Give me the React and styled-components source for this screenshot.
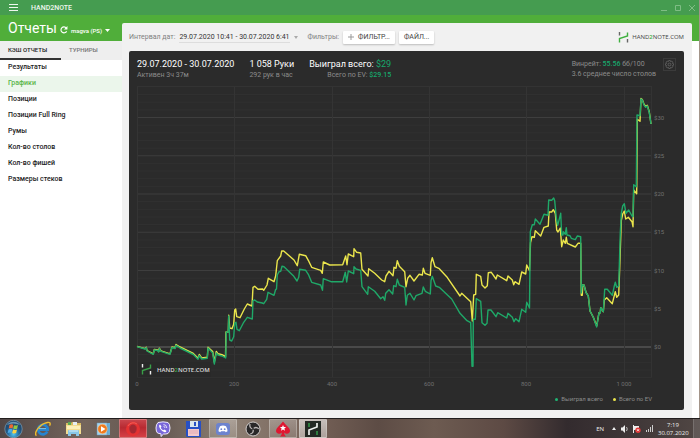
import React from "react";
import styled, { createGlobalStyle } from "styled-components";

const Global = createGlobalStyle`
  *, *::before, *::after { box-sizing: border-box; }
  body { margin: 0; font-family: Roboto, "Liberation Sans", sans-serif; font-size: 7px; line-height: 10px; color: #222; background: #fff; }
  button { font: inherit; color: inherit; background: none; border: 0; padding: 0; margin: 0; white-space: nowrap; }
  svg { display: block; flex: none; }
`;

const Screen = styled.div`
  min-height: 100vh;
  display: flex;
  flex-direction: column;
`;

const AppWindow = styled.div`
  flex: 1;
  display: flex;
  flex-direction: column;
  border-right: 1px solid #a39489;
  background: linear-gradient(#459c50 0 15px, #50ae3a 15px 41px, #fff 41px);
`;

const TitleBar = styled.header`
  height: 15px;
  display: flex;
  align-items: center;
  gap: 13px;
  padding: 0 3px 0 9px;
  color: #eef7ee;
`;

const AppName = styled.span`
  flex: 1;
  font-size: 7px;
  font-weight: 500;
`;

const WindowButtons = styled.div`
  display: flex;
  gap: 5px;
  color: #7fbd85;
`;

const IconButton = styled.button`
  display: grid;
  place-items: center;
`;

const Columns = styled.div`
  flex: 1;
  display: grid;
  grid-template-columns: 122px minmax(0, 1fr);
`;

const Sidebar = styled.aside`
  display: flex;
  flex-direction: column;
`;

const SideHeader = styled.div`
  height: 26px;
  display: flex;
  align-items: center;
  gap: 3px;
  padding-left: 8px;
  color: #fff;
`;

const SideTitle = styled.h1`
  margin: 0;
  font-size: 14px;
  line-height: 16px;
  font-weight: 400;
`;

const AccountButton = styled.button`
  display: flex;
  align-items: center;
  gap: 3px;
  padding-top: 5px;
  font-size: 6px;
  font-weight: 500;
`;

const RefreshButton = styled(IconButton)`
  padding-top: 4px;
`;

const Tabs = styled.div`
  display: grid;
  grid-template-columns: 1fr 1fr;
  height: 19px;
  background: #eee;
`;

const Tab = styled.button`
  padding: 0 0 0 8px;
  text-align: left;
  font-size: 6px;
  font-weight: 500;
  color: ${(p) => (p.$active ? "#222" : "#777")};
  border-bottom: 2px solid ${(p) => (p.$active ? "#333" : "transparent")};
`;

const Nav = styled.nav`
  display: flex;
  flex-direction: column;
`;

const NavLink = styled.a`
  height: 16px;
  line-height: 15px;
  padding-left: 8px;
  font-weight: 500;
  text-decoration: none;
  color: ${(p) => (p.$active ? "#59b548" : "#222")};
  background: ${(p) => (p.$active ? "#ebf6eb" : "transparent")};
`;

const Panel = styled.main`
  margin: 8px 7px 0 0;
  padding: 0 8px 7px 7px;
  border-radius: 2px 2px 0 0;
  background: #f1f1f1;
`;

const FilterBar = styled.div`
  height: 28px;
  display: flex;
  align-items: center;
  color: #808080;
`;

const DateRange = styled.button`
  display: flex;
  align-items: center;
  gap: 4px;
  margin: 0 10px 0 4px;
  color: #aaa;
`;

const DateText = styled.span`
  color: #333;
  border-bottom: 1px solid #ddd;
`;

const FilterButton = styled.button`
  height: 13px;
  display: flex;
  align-items: center;
  gap: 4px;
  margin-left: 4px;
  padding: 0 5px;
  border-radius: 1px;
  color: #444;
  background: #fff;
  box-shadow: 0 1px 2px rgba(0, 0, 0, 0.22);
`;

const Brand = styled.div`
  display: flex;
  align-items: center;
  gap: 3px;
  margin-left: auto;
  font-family: "Open Sans", "Noto Sans", sans-serif;
  font-size: 6px;
  color: #444;
`;

const BrandDigit = styled.span`
  color: #3fb03f;
  font-weight: 600;
`;

const Card = styled.section`
  padding-bottom: 6px;
  border-radius: 2px;
  background: #2b2b2b;
  color: #8b8b8b;
`;

const Summary = styled.div`
  display: flex;
  gap: 15px;
  padding: 7px 8px 3px;
`;

const Stat = styled.div`
  text-align: ${(p) => p.$align || "left"};
  white-space: nowrap;
`;

const StatMain = styled.div`
  font-size: 9px;
  line-height: 12px;
  color: #fff;
`;

const Money = styled.span`
  font-weight: ${(p) => (p.$strong ? 500 : 400)};
  color: #18a76c;
`;

const WinRate = styled.div`
  margin-left: auto;
  padding-top: 1px;
  white-space: nowrap;
`;

const GearButton = styled(IconButton)`
  width: 13px;
  height: 13px;
  margin-left: -8px;
  border: 1px solid #3b3b3b;
  color: #666;
`;

const Chart = styled.svg`
  width: 100%;
  height: auto;
`;

const AxisText = styled.text`
  font: 6px Roboto, sans-serif;
  fill: #707070;
`;

const WatermarkText = styled.text`
  font: 600 6px "Open Sans", "Noto Sans", sans-serif;
  fill: #ddd;
`;

const Legend = styled.div`
  display: flex;
  justify-content: flex-end;
  gap: 10px;
  padding-right: 32px;
`;

const LegendItem = styled.div`
  display: flex;
  align-items: center;
  gap: 3px;
  font-size: 6px;
  &::before {
    content: "";
    width: 3px;
    height: 3px;
    border-radius: 50%;
    background: ${(p) => p.$color};
  }
`;

const Taskbar = styled.footer`
  height: 20px;
  display: flex;
  align-items: stretch;
  gap: 2px;
  border-top: 1px solid #221e1e;
  background: linear-gradient(90deg, #514746, #74655c 12%, #625650 22%, #8e8074 33%, #756157 45%, #5d4c45 54%, #6d5b51 62%, #5d4a44 72%, #332b2e 81%, #3e3637 90%, #514744);
`;

const TaskButton = styled.button`
  width: ${(p) => (p.$start ? 27 : 28)}px;
  display: grid;
  place-items: center;
  border-radius: 1px;
  border: 1px solid ${(p) => (p.$frame ? "rgba(230,225,220,.35)" : "transparent")};
  background: ${(p) => p.$fill || "transparent"};
`;

const Tray = styled.div`
  display: flex;
  align-items: center;
  gap: 5px;
  margin-left: auto;
  font-family: "Open Sans", "Noto Sans", sans-serif;
  font-size: 6px;
  color: #eee;
`;

const Language = styled.span`
  margin-right: 3px;
`;

const Clock = styled.time`
  width: 30px;
  line-height: 8px;
  text-align: center;
  white-space: nowrap;
`;

const ShowDesktop = styled.button`
  align-self: stretch;
  width: 7px;
  border-left: 1px solid #77706e;
  background: rgba(255, 255, 255, 0.1);
`;

const won = `137,346.7 145,349 146.3,347.7 147,351 153.3,354.3 154.3,350 157.7,350.5 158.7,352 159.3,348.7 161,351.3 170,354.3
172,347.5 175,348.5 176,345.3 180,348 193.3,354.5 198,359.3 199.3,355.5 201.7,359 207.3,358.3 208,348 212.7,353 214.3,364
216.3,353 218,355 222,356 225.7,358 226.3,332 228.3,332 228.7,316 229.7,340 231.7,341 233.7,336.7 234.7,323.3 236,322.3
237,329.3 239.3,330.7 243.7,322.3 247.3,317.3 252.3,319 253,300.7 254.7,300 257.3,302 262.3,303 263.7,303.7 266.7,299.3
268,292.3 274,295.3 275.7,289.3 276.5,289 277.3,275 279,271.7 280.7,271.3 282,266.3 284,266.7 293.3,275.7 297,281
298.7,277.3 299.7,269.3 305.7,270.3 308.3,274.3 311.7,282.3 320.7,285 322.5,290.3 323.3,278.7 331,281.7 342.7,281.7
345.3,272.3 346.7,282 348.3,271 353.7,273.7 354,266.7 356,269 360.7,270.3 362,286.7 367.7,294.3 368.3,286.7 374.7,291.3
380.7,298.7 383,296.7 384.7,300.3 385.7,293.3 389,289.7 392.7,294 393.7,285.7 396,286.7 397.3,279.3 399.3,285 404.7,287.3
406,305 407.3,295.3 410,293.3 414,300 416,295.7 422,293.3 423.3,287 425.3,291.3 430.3,294 431,280.7 432.3,276.3
435.7,286 439.3,287.3 451.7,299 460,313.3 467,320.7 470.7,322.7 472,366.3 473,366.3 473.3,319.3 475.3,319.3 476.3,298.7
480.7,301.3 482,322.7 485,325.3 487,323.3 488,310 491,310 496,316.7 497.7,312.7 506.7,318 508,313.3 512.3,317.3
514,321.7 515.7,318.7 519,321.7 521.7,309.3 525.7,312.3 526.7,302.3 529.5,308 530.3,231.7 532.3,224.7 534.3,224.7
535.3,219 540,224.3 544,214.3 548,215.3 548.7,200 551.7,200.3 553.7,198 554.7,200.7 556.3,218 557.7,225.3 560.7,213.3
561.7,235 563,235 563.3,231.7 565.3,234.3 566.3,227.7 567,235 570,235.7 571.3,238.3 575.3,239.7 577.3,236 580.7,236.7
581.3,293 582.3,285 584,285 586,292.7 588.3,296 590,311 593.3,317.3 596.7,327 599,312.7 600.3,312.7 600.7,307.7
603.3,311.7 604.7,289.3 607.3,289.3 612.3,295.3 614,287.3 615.3,282.3 616.7,287.3 618.7,286 620.3,233 621.3,213.3
622.7,206 624.3,203.7 626,213.3 628.7,210 632,216 633,216.7 633.7,184.7 636.3,186.7 637,115 640,115.7 641,99
642.3,100 644,105 645.7,107.3 647.3,106 649.3,112.7 651,124`;

const ev = `137,346.3 145,348.7 146.3,347.3 147,350.5 153.3,353.8 154.3,349.5 157.7,350 158.7,351.5 159.3,348.2 161,350.8 170,353.8
172,347 175,347.7 176,344.5 180,347 193.3,353.5 198,358.3 199.3,354.5 201.7,358 207.3,357.3 208,347.3 212.7,351.5 214.3,362
216.3,351.5 218,353.8 222,354.7 225.5,356.7 226,332 228.3,332 228.7,315.3 229.7,328 232,328.7 233.7,324.3 234.7,310
235.7,309 236.7,316.7 240,317.7 244.3,309 247.3,304 252,306 253,287.3 254.7,286.3 258,289.3 262.7,289 263.7,290.3
267,285 268.3,278.3 274,281.7 275.7,275.7 277.3,260.7 280.7,256 281.7,251 283.7,251 294,260 297.3,265.7 299.3,254.3
305.7,255.7 309,261.7 311.7,267.3 320.7,270.3 322.3,273.3 323.3,262 329.7,265 342.7,264.7 345.7,256 347,264.7 348.3,254
353.7,256.7 354,248.7 356.7,252.3 360.7,253 362,269.3 368,276 368.7,268.7 374.7,273.3 381.7,280 384.7,281.7 386,276
389,271.3 393,275.7 394,267.3 396,268.3 397.3,260.7 399.3,266.3 404.7,271.7 406,286.7 407.7,278.3 410,275.3 414,281
419,274.3 422.3,275 423.3,268.3 425,273.3 430.3,275.3 431,262.7 432.3,257.7 435,266.7 439.3,268.7 446.7,276.7 460,296
461.7,293.3 470.7,301.7 472.3,321 473.7,295 475.7,294.3 476.3,274.3 480.7,276.3 482,285 485,288 487.3,285.7 488.3,272.7
491.3,272.3 496,279 497.3,275 506.7,280.7 508,276 512.3,280 513.7,284.7 515,281.7 519,284.3 521.7,272 525.7,274
526.7,265 529.5,270.7 530.5,242.7 532,236.7 534.3,237.3 535.3,230.7 540.7,236 544,227.3 548.3,226 549,212 551.7,212
553.3,209.7 555.3,213.3 556.7,230 558,232 560.3,228 561.7,246.7 563.3,240 565.3,243.3 566.3,237.3 567.3,243.3 575.3,247
578,243.3 580.7,243.3 581.3,295.3 582.3,295.3 582.7,285 584,285 586,292.3 588.3,296 590,311 593.3,317.3 596.7,326
599,312.7 600.3,312.7 600.7,307.7 603.3,311.7 604.3,300 606.7,297.7 612.3,303.7 615.3,291.7 616.7,297.3 618.7,295
619.7,268 621.3,220.7 622.7,214 624.3,211 625.7,219 628.3,217.3 632,221.7 633,226.7 633.7,190 636.7,193.7 637.3,119.3
640,121.3 641,98.5 642.3,99.5 644,104.3 645.7,106.5 647.3,105.3 649.3,112 651,124`;

const xTicks = [
  [137, "0"], [234, "200"], [332, "400"], [429, "600"], [526, "800"], [624, "1 000"],
];
const dollarY = (v) => 347 - v * 7.65;
const minorTicks = Array.from({ length: 38 }, (_, i) => i - 4);

const links = ["Результаты", "Графики", "Позиции", "Позиции Full Ring", "Румы", "Кол-во столов", "Кол-во фишей", "Размеры стеков"];

const BrandShape = ({ post, bar }) => (
  <g fill="none" strokeWidth="1.4">
    <path d="M1.500 0V3.500M9.500 7V10.500" stroke={post} />
    <path d="M1.500 10.500V6.500L9.500 4V.5" stroke={bar} />
  </g>
);

function ProfitChart() {
  return (
    <Chart viewBox="129 83 555 311" role="img" aria-label="График выигрыша">
      {minorTicks.map((v) => (
        <path key={v} d={`M137 ${dollarY(v)}H652`} stroke={v === 0 ? "#555" : v % 5 === 0 ? "#3e3e3e" : "#313131"} strokeWidth={v === 0 ? 1.5 : 1} />
      ))}
      {xTicks.map(([x]) => (
        <path key={x} d={`M${x + 0.5} 86V377`} stroke="#343434" />
      ))}
      <path d="M137 86.500H652M651.500 86V377" stroke="#333" fill="none" />
      <rect x="138" y="362" width="73" height="15" fill="#292929" />
      <g transform="translate(141 364)"><BrandShape post="#eee" bar="#3a9f48" /></g>
      <WatermarkText x="157" y="372">HAND<tspan fill="#3a9f48">2</tspan>NOTE.COM</WatermarkText>
      <polyline points={ev} fill="none" stroke="#ebe64c" strokeWidth="1.400" strokeLinejoin="round" />
      <polyline points={won} fill="none" stroke="#1fa868" strokeWidth="1.400" strokeLinejoin="round" />
      {xTicks.map(([x, label]) => (
        <AxisText key={label} x={x} y="386" textAnchor="middle">{label}</AxisText>
      ))}
      {[0, 5, 10, 15, 20, 25, 30].map((v) => (
        <AxisText key={v} x="654" y={dollarY(v) + 2}>${v}</AxisText>
      ))}
    </Chart>
  );
}

const icons = {
  start: (
    <svg width="19" height="18" viewBox="0 0 19 18">
      <defs><radialGradient id="orb" cy=".8"><stop offset="0" stopColor="#54c5ee" /><stop offset=".6" stopColor="#246fa4" /><stop offset="1" stopColor="#214c72" /></radialGradient></defs>
      <circle cx="9.5" cy="9" r="8.7" fill="url(#orb)" stroke="#8cadc2" strokeWidth=".6" />
      <path d="M3 5A8 8 0 0 1 16 5Q9 2 3 5" fill="#9cc5dc" opacity=".6" />
      <path d="M5.5 5q2-1.4 3.8-.2l-.8 3.6q-2-1-3.8.2z" fill="#ed6832" />
      <path d="M10 5.2q2 .9 4-.2l-.9 3.7q-2 .9-3.9-.2z" fill="#95c940" />
      <path d="M4.5 9.4q2-1.2 3.8-.1l-.8 3.5q-2-.9-3.8.2z" fill="#4ba8e7" />
      <path d="M9 9.5q2 1 4-.1l-.9 3.6q-2 .9-3.9-.1z" fill="#fbd246" />
    </svg>
  ),
  ie: (
    <svg width="18" height="16" viewBox="0 0 18 16">
      <path d="M13.3 10.5A4.8 4.8 0 1 1 13.7 8.6H5" fill="none" stroke="#2584cf" strokeWidth="2.7" />
      <path d="M5 7.6h7" stroke="#93d3f4" strokeWidth=".8" />
      <path d="M2.4 14.7C-.6 12.5 5 3.2 13.4 1.5c3-.6 3.4 1 2.2 3.2" fill="none" stroke="#efbd2e" strokeWidth="1.4" />
    </svg>
  ),
  folder: (
    <svg width="17" height="16" viewBox="0 0 17 16">
      <path d="M1 2h5l1-1h4l1 1h4v11H1z" fill="#dabb62" />
      <path d="M3 1h3v3H3z" fill="#5aaa53" /><path d="M8 1h4v3H8z" fill="#e6eef2" />
      <path d="M1 4h15v9H1z" fill="#f3dd91" /><path d="M2 5h13v3H2z" fill="#fcf0ba" />
      <path d="M3 15V10q0-1 1-1h9q1 0 1 1v5h-3v-2H6v2z" fill="#89c7e7" /><path d="M4 10h9" stroke="#d8f1fb" />
    </svg>
  ),
  player: (
    <svg width="15" height="14" viewBox="0 0 15 14">
      <path d="M4 1h10v12H4z" fill="#6baed5" /><path d="M1 1h10v12H1z" fill="#a7d4ec" stroke="#6a9bb9" strokeWidth=".5" />
      <circle cx="6.5" cy="7" r="4.7" fill="#ee7a1d" stroke="#ffc38b" strokeWidth=".6" /><path d="M5 4.3L9.5 7 5 9.7z" fill="#fff" />
    </svg>
  ),
  opera: (
    <svg width="16" height="16" viewBox="0 0 16 16">
      <ellipse cx="8" cy="8" rx="5.5" ry="5.7" fill="none" stroke="#e43232" strokeWidth="3" />
      <ellipse cx="8" cy="8" rx="3" ry="4.5" fill="#a52931" />
      <path d="M3 5a6 6 0 0 1 9-2" fill="none" stroke="#f36860" strokeWidth=".8" />
    </svg>
  ),
  viber: (
    <svg width="16" height="16" viewBox="0 0 16 16">
      <path d="M3 1.5Q8 .2 13 1.5q1.8 1 2 5.5-.2 4.5-2 5.5-2 .7-4.5.6L6 15.5v-2.7Q3.5 12.5 2.5 12 1 10.500 1 7t2-5.500z" fill="#7967d9" stroke="#eeeafd" />
      <path d="M5 3.500l1.500 2-.8 1.300q.8 1.800 2.500 2.500l1.300-.8 2 1.500q-.6 1.500-1.800 1.300Q5 9.500 4 5q0-1 1-1.500" fill="#fff" />
      <path d="M8.500 3.500q3 .2 3.300 3.500M8.500 5.300q1.300.2 1.500 1.600" stroke="#fff" fill="none" strokeWidth=".8" />
    </svg>
  ),
  floppy: (
    <svg width="15" height="16" viewBox="0 0 15 16">
      <path d="M0 0h15v16H1l-1-1z" fill="#2750c5" /><path d="M4 0h8v6H4z" fill="#d9e6ee" /><path d="M8 1h2v4H8z" fill="#2750c5" />
      <path d="M2 8h11v7H2z" fill="#f2c9cc" /><path d="M3 10h9M3 12h9" stroke="#d999a3" strokeWidth=".6" />
    </svg>
  ),
  discord: (
    <svg width="14" height="12" viewBox="0 0 14 12">
      <rect width="14" height="12" rx="3" fill="#6c83cf" />
      <path d="M4 3.200Q7 2 10 3.200q1.500 2.500 1.500 5L9.700 9.300 9 8.300H5l-.7 1L2.500 8.200q0-2.500 1.500-5" fill="#fff" />
      <circle cx="5.300" cy="6.200" r=".9" fill="#6c83cf" /><circle cx="8.700" cy="6.200" r=".9" fill="#6c83cf" />
    </svg>
  ),
  obs: (
    <svg width="16" height="16" viewBox="0 0 16 16">
      <circle cx="8" cy="8" r="7" fill="#292829" stroke="#d0cccb" />
      <g fill="none" stroke="#b9b5b5" strokeWidth="1.300"><path d="M8 8Q4 7 5 3" /><path d="M8 8Q4 7 5 3" transform="rotate(120 8 8)" /><path d="M8 8Q4 7 5 3" transform="rotate(240 8 8)" /></g>
      <circle cx="8" cy="8" r="1" fill="#292829" />
    </svg>
  ),
  spade: (
    <svg width="16" height="16" viewBox="0 0 16 16">
      <path d="M8 .5Q10 3 13 6q3 3 1.500 5.500Q12 14 9 11.500q.2 2.500 2 4H5q1.800-1.500 2-4Q4 14 1.500 11.500 0 9 3 6 6 3 8 .5" fill="#df1731" />
      <path d="M8 4l.9 2h2.200L9.400 7.500l.6 2.200-2-1.200-2 1.200.6-2.200L4.900 6h2.200z" fill="#fff" />
    </svg>
  ),
  h2n: (
    <svg width="16" height="16" viewBox="0 0 16 16">
      <rect width="16" height="16" fill="#222823" />
      <path d="M4 2v4M12 10v4" stroke="#35a94e" strokeWidth="1.300" /><path d="M4 14V9l8-3V2" stroke="#ecefed" fill="none" strokeWidth="1.700" />
    </svg>
  ),
};

const frame = "linear-gradient(rgba(255,255,255,.26), rgba(255,255,255,.12))";
const tasks = [
  ["ie", "Internet Explorer"], ["folder", "Проводник"], ["player", "Проигрыватель"],
  ["opera", "Opera", "linear-gradient(#c8454c, #b82a32 45%, #d64045)"], ["viber", "Viber"], ["floppy", "Total Commander"],
  ["discord", "Discord", frame], ["obs", "OBS"], ["spade", "PokerStars", frame],
  ["h2n", "Hand2Note", "linear-gradient(rgba(255,255,255,.6), rgba(255,255,255,.42))"],
];

export default function App() {
  return (
    <Screen>
      <Global />
      <AppWindow>
        <TitleBar>
          <IconButton aria-label="Меню">
            <svg width="9" height="7" viewBox="0 0 9 7" stroke="currentColor"><path d="M0 .5h9M0 3.500h9M0 6.500h9" /></svg>
          </IconButton>
          <AppName>HAND2NOTE</AppName>
          <WindowButtons>
            <IconButton aria-label="Свернуть"><svg width="9" height="8" viewBox="0 0 9 8" stroke="currentColor"><path d="M1 6.500h6" /></svg></IconButton>
            <IconButton aria-label="Развернуть"><svg width="8" height="8" viewBox="0 0 8 8" stroke="currentColor" fill="none"><path d="M1.500 1.500h5v5h-5z" /></svg></IconButton>
            <IconButton aria-label="Закрыть"><svg width="9" height="8" viewBox="0 0 9 8" stroke="currentColor"><path d="M2 1l6 6M8 1L2 7" /></svg></IconButton>
          </WindowButtons>
        </TitleBar>
        <Columns>
          <Sidebar>
            <SideHeader>
              <SideTitle>Отчеты</SideTitle>
              <RefreshButton aria-label="Обновить">
                <svg width="8" height="8" viewBox="0 0 7 7" fill="none" stroke="currentColor"><path d="M5.800 4.500A2.600 2.600 0 1 1 5.500 1.800" /><path d="M6.500 0v3h-3z" fill="currentColor" stroke="none" /></svg>
              </RefreshButton>
              <AccountButton>
                magva (PS)
                <svg width="5" height="3" viewBox="0 0 5 3" fill="currentColor"><path d="M0 0h5L2.500 3z" /></svg>
              </AccountButton>
            </SideHeader>
            <Tabs role="tablist">
              <Tab role="tab" aria-selected="true" $active>КЭШ ОТЧЕТЫ</Tab>
              <Tab role="tab" aria-selected="false">ТУРНИРЫ</Tab>
            </Tabs>
            <Nav>
              {links.map((text, i) => (
                <NavLink key={text} href={`#${i}`} $active={i === 1}>{text}</NavLink>
              ))}
            </Nav>
          </Sidebar>
          <Panel>
            <FilterBar>
              <span id="range-label">Интервал дат:</span>
              <DateRange aria-describedby="range-label">
                <DateText>29.07.2020 10:41 - 30.07.2020 6:41</DateText>
                <svg width="4" height="3" viewBox="0 0 4 3" fill="currentColor"><path d="M0 0h4L2 3z" /></svg>
              </DateRange>
              <span>Фильтры:</span>
              <FilterButton>
                <svg width="6" height="6" viewBox="0 0 6 6" stroke="#999"><path d="M0 3h6M3 0v6" /></svg>
                ФИЛЬТР...
              </FilterButton>
              <FilterButton>ФАЙЛ...</FilterButton>
              <Brand>
                <svg width="11" height="11" viewBox="0 0 11 11"><BrandShape post="#666" bar="#3fb03f" /></svg>
                <span>HAND<BrandDigit>2</BrandDigit>NOTE.COM</span>
              </Brand>
            </FilterBar>
            <Card>
              <Summary>
                <Stat>
                  <StatMain>29.07.2020 - 30.07.2020</StatMain>
                  Активен 3ч 37м
                </Stat>
                <Stat>
                  <StatMain>1 058 Руки</StatMain>
                  292 рук в час
                </Stat>
                <Stat $align="right">
                  <StatMain>Выиграл всего: <Money>$29</Money></StatMain>
                  Всего по EV: <Money $strong>$29.15</Money>
                </Stat>
                <WinRate>
                  <div>Винрейт: <Money $strong>55.56</Money> бб/100</div>
                  <div>3.6 среднее число столов</div>
                </WinRate>
                <GearButton aria-label="Настройки">
                  <svg width="9" height="9" viewBox="0 0 9 9" fill="none" stroke="currentColor" strokeWidth=".8">
                    <path d="M3.700.5h1.600l.3 1.200 1.200-.6 1.100 1.100-.6 1.200 1.200.3v1.600l-1.200.3.6 1.200-1.100 1.100-1.200-.6-.3 1.200H3.700l-.3-1.200-1.200.6-1.100-1.100.6-1.200L.5 5.300V3.700l1.200-.3-.6-1.200 1.100-1.100 1.200.6z" /><circle cx="4.500" cy="4.500" r="1.400" />
                  </svg>
                </GearButton>
              </Summary>
              <ProfitChart />
              <Legend>
                <LegendItem $color="#1fb573">Выиграл всего</LegendItem>
                <LegendItem $color="#ebe64c">Всего по EV</LegendItem>
              </Legend>
            </Card>
          </Panel>
        </Columns>
      </AppWindow>
      <Taskbar>
        <TaskButton $start aria-label="Пуск">{icons.start}</TaskButton>
        {tasks.map(([id, label, fill]) => (
          <TaskButton key={id} aria-label={label} $fill={fill} $frame={!!fill}>{icons[id]}</TaskButton>
        ))}
        <Tray>
          <Language>EN</Language>
          <svg width="4" height="3" viewBox="0 0 4 3"><path d="M0 3h4L2 0z" fill="#eee" /></svg>
          <svg width="7" height="8" viewBox="0 0 7 8"><path d="M0 2.500h1.500L4 0v8L1.500 5.500H0z" fill="#eee" /><path d="M5.500 2q1.500 2 0 4" stroke="#ddd" fill="none" strokeWidth=".8" /></svg>
          <svg width="8" height="8" viewBox="0 0 8 8"><path d="M.5 0v8" stroke="#eee" /><path d="M1 1h5v4H1z" fill="#eee" /><circle cx="5" cy="5.200" r="2.700" fill="#df3737" /><path d="M4 4.200l2 2M6 4.200l-2 2" stroke="#fff" strokeWidth=".8" /></svg>
          <svg width="7" height="7" viewBox="0 0 7 7" fill="#ccc"><path d="M0 5h1v2H0zM2 4h1v3H2zM4 2h1v5H4zM6 0h1v7H6z" /></svg>
          <Clock>7:19<br />30.07.2020</Clock>
          <ShowDesktop aria-label="Рабочий стол" />
        </Tray>
      </Taskbar>
    </Screen>
  );
}
